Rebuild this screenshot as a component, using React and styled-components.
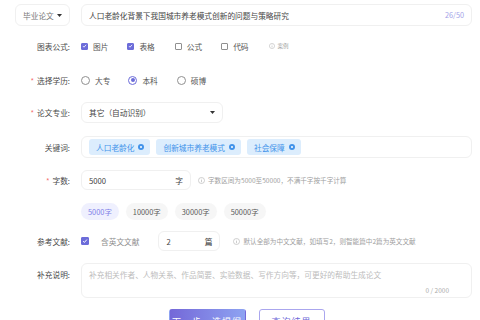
import React from "react"
import styled, { createGlobalStyle } from "styled-components"

const GlobalStyle = createGlobalStyle`
    html, body {
        margin: 0;
        padding: 0;
        background: #ffffff;
    }
    body {
        font-family: "Noto Sans CJK SC", "Noto Sans", sans-serif;
        color: #333333;
        overflow: hidden;
    }
`

const Page = styled.div`
    width: 480px;
    height: 320px;
    box-sizing: border-box;
    padding: 4px 8px 0 15px;
    overflow: hidden;
`

const Row = styled.div`
    display: grid;
    grid-template-columns: 55px 1fr;
    column-gap: 11px;
    align-items: ${p => (p.$top ? "start" : "center")};
    margin-top: ${p => p.$mt || 0}px;
    height: ${p => p.$h}px;
`

const Label = styled.div`
    font-size: 7.7px;
    color: #4a4a4a;
    text-align: right;
    white-space: nowrap;
    padding-top: ${p => (p.$top ? "6px" : "0")};
    &::before {
        content: ${p => (p.$required ? '"*"' : '""')};
        color: #f56c6c;
        margin-right: 3px;
    }
`

const Field = styled.div`
    display: flex;
    align-items: center;
    box-sizing: border-box;
    height: 100%;
    width: ${p => (p.$w ? `${p.$w}px` : "100%")};
    border: 1px solid #f0f0f0;
    border-radius: 6px;
    padding: 0 7px;
    font-size: 7.7px;
    color: #444;
    background: #fff;
`

const FieldText = styled.span`
    flex: 1;
    white-space: nowrap;
    overflow: hidden;
    color: ${p => (p.$muted ? "#777" : "#444")};
`

const Counter = styled.span`
    font-size: 7.3px;
    color: #a3a2e8;
`

const Suffix = styled.span`
    font-size: 7.7px;
    color: #444;
`

const Options = styled.div`
    display: flex;
    align-items: center;
`

const Option = styled.label`
    display: flex;
    align-items: center;
    font-size: 7.7px;
    color: ${p => (p.$muted ? "#8e8e8e" : "#555")};
    margin-right: ${p => p.$mr || 0}px;
    white-space: nowrap;
`

const Box = styled.span`
    display: inline-flex;
    align-items: center;
    justify-content: center;
    box-sizing: border-box;
    width: ${p => p.$size || 7}px;
    height: ${p => p.$size || 7}px;
    border-radius: 1px;
    border: 1px solid ${p => (p.$on ? "#6c6cd9" : "#909090")};
    background: ${p => (p.$on ? "#6c6cd9" : "#fff")};
    margin-right: ${p => p.$gap || 5}px;
`

const Radio = styled.span`
    display: inline-flex;
    align-items: center;
    justify-content: center;
    box-sizing: border-box;
    width: 9px;
    height: 9px;
    border-radius: 50%;
    border: 1px solid ${p => (p.$on ? "#6c6cd9" : "#909090")};
    margin-right: 5px;
    &::after {
        content: "";
        width: 4px;
        height: 4px;
        border-radius: 50%;
        background: ${p => (p.$on ? "#6c6cd9" : "transparent")};
    }
`

const Hint = styled.span`
    display: inline-flex;
    align-items: center;
    font-size: ${p => p.$fs || 6.6}px;
    color: #a0a0a0;
    white-space: nowrap;
    margin-left: ${p => p.$ml || 0}px;
    svg {
        margin-right: 3px;
    }
`

const Inline = styled.div`
    display: flex;
    align-items: center;
    height: 100%;
`

const Tag = styled.span`
    display: inline-flex;
    align-items: center;
    height: 16px;
    padding: 0 6px 0 7px;
    margin-right: 6px;
    border-radius: 3px;
    background: #dcedfd;
    color: #4293ea;
    font-size: 7.7px;
    white-space: nowrap;
    svg {
        margin-left: 4px;
    }
`

const Chip = styled.span`
    display: inline-flex;
    align-items: center;
    height: 100%;
    padding: 0 7px;
    margin-right: 7px;
    border-radius: 9px;
    font-size: 7.4px;
    background: ${p => (p.$on ? "#eff0fe" : "#f6f6f6")};
    color: ${p => (p.$on ? "#8080e8" : "#5a5a5a")};
`

const TextArea = styled.div`
    position: relative;
    box-sizing: border-box;
    height: 100%;
    border: 1px solid #f0f0f0;
    border-radius: 6px;
    padding: 5px 7px;
    font-size: 7.7px;
    color: #bcbcbc;
`

const Count = styled.span`
    position: absolute;
    right: 22px;
    bottom: 2px;
    font-size: 6.5px;
    color: #ababab;
`

const Actions = styled.div`
    display: flex;
    justify-content: center;
    gap: 13px;
    margin-top: 11px;
    padding-left: 6px;
`

const Button = styled.button`
    box-sizing: border-box;
    height: 24px;
    width: ${p => p.$w}px;
    border-radius: 3px;
    font-family: inherit;
    font-size: 9px;
    letter-spacing: 1px;
    border: 1px solid ${p => (p.$primary ? "transparent" : "#aaa6ee")};
    background: ${p => (p.$primary ? "linear-gradient(90deg, #7468d8, #8ea3f2)" : "#fff")};
    color: ${p => (p.$primary ? "#fff" : "#6f6ad8")};
    padding: 0;
`

const Caret = () => (
    <svg width="5" height="3" viewBox="0 0 5 3"><path d="M0 0h5L2.5 3z" fill="#333" /></svg>
)

const Check = () => (
    <svg width="6" height="6" viewBox="0 0 10 10"><path d="M2 5.2l2 2.2L8.2 2.6" stroke="#fff" strokeWidth="1.6" fill="none" /></svg>
)

const Info = ({ size = 6 }) => (
    <svg width={size} height={size} viewBox="0 0 12 12">
        <circle cx="6" cy="6" r="5.2" stroke="#b0b0b0" strokeWidth="1" fill="none" />
        <path d="M6 5v4M6 3v1" stroke="#b0b0b0" strokeWidth="1.1" />
    </svg>
)

const Close = () => (
    <svg width="6" height="6" viewBox="0 0 12 12">
        <circle cx="6" cy="6" r="6" fill="#4293ea" />
        <path d="M4 4l4 4M8 4l-4 4" stroke="#fff" strokeWidth="1.5" />
    </svg>
)

export default function App() {
    return (
        <>
            <GlobalStyle />
            <Page>
                <Row $h={22}>
                    <Field>
                        <FieldText $muted>毕业论文</FieldText>
                        <Caret />
                    </Field>
                    <Field>
                        <FieldText>人口老龄化背景下我国城市养老模式创新的问题与策略研究</FieldText>
                        <Counter>26/50</Counter>
                    </Field>
                </Row>

                <Row $h={20} $mt={10}>
                    <Label>图表公式:</Label>
                    <Options>
                        <Option $mr={19}><Box $on><Check /></Box>图片</Option>
                        <Option $mr={20}><Box $on><Check /></Box>表格</Option>
                        <Option $mr={19}><Box />公式</Option>
                        <Option $mr={20}><Box />代码</Option>
                        <Hint $fs={5.5}><Info size={6} />案例</Hint>
                    </Options>
                </Row>

                <Row $h={20} $mt={14}>
                    <Label $required>选择学历:</Label>
                    <Options>
                        <Option $mr={18}><Radio />大专</Option>
                        <Option $mr={19}><Radio $on />本科</Option>
                        <Option><Radio />硕博</Option>
                    </Options>
                </Row>

                <Row $h={21} $mt={12}>
                    <Label $required>论文专业:</Label>
                    <Field $w={142}>
                        <FieldText>其它（自动识别）</FieldText>
                        <Caret />
                    </Field>
                </Row>

                <Row $h={22} $mt={13}>
                    <Label>关键词:</Label>
                    <Field>
                        <Tag>人口老龄化<Close /></Tag>
                        <Tag>创新城市养老模式<Close /></Tag>
                        <Tag>社会保障<Close /></Tag>
                    </Field>
                </Row>

                <Row $h={20} $mt={12}>
                    <Label $required>字数:</Label>
                    <Inline>
                        <Field $w={110}>
                            <FieldText>5000</FieldText>
                            <Suffix>字</Suffix>
                        </Field>
                        <Hint $ml={7}><Info size={7} />字数区间为5000至50000，不满千字按千字计算</Hint>
                    </Inline>
                </Row>

                <Row $h={17} $mt={13}>
                    <div />
                    <Inline>
                        <Chip $on>5000字</Chip>
                        <Chip>10000字</Chip>
                        <Chip>30000字</Chip>
                        <Chip>50000字</Chip>
                    </Inline>
                </Row>

                <Row $h={20} $mt={11}>
                    <Label>参考文献:</Label>
                    <Inline>
                        <Option $muted $mr={19}><Box $on $size={8} $gap={12}><Check /></Box>含英文文献</Option>
                        <Field $w={62}>
                            <FieldText>2</FieldText>
                            <Suffix>篇</Suffix>
                        </Field>
                        <Hint $ml={13}><Info size={7} />默认全部为中文文献，如填写2，则智能篇中2篇为英文文献</Hint>
                    </Inline>
                </Row>

                <Row $h={35} $mt={12} $top>
                    <Label $top>补充说明:</Label>
                    <TextArea>
                        补充相关作者、人物关系、作品简要、实验数据、写作方向等，可更好的帮助生成论文
                        <Count>0 / 2000</Count>
                    </TextArea>
                </Row>

                <Actions>
                    <Button $primary $w={77}>下一步，选提纲</Button>
                    <Button $w={66}>查询结果</Button>
                </Actions>
            </Page>
        </>
    )
}
